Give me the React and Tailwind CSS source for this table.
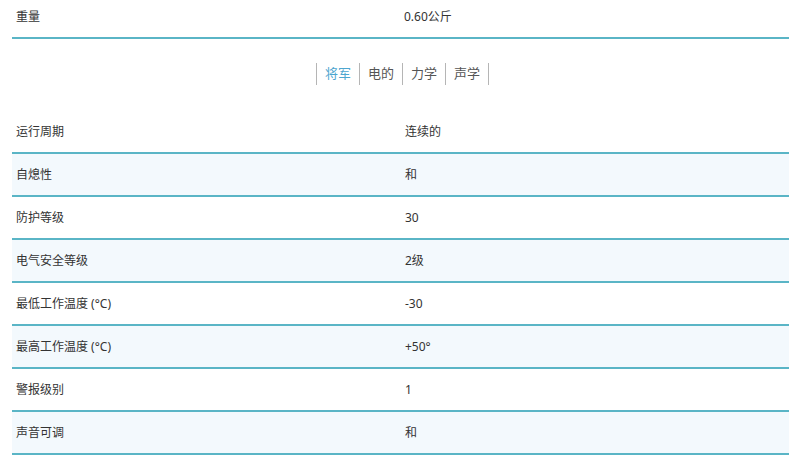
import React from 'react';

const rows = [
  ['运行周期', '连续的'],
  ['自熄性', '和'],
  ['防护等级', '30'],
  ['电气安全等级', '2级'],
  ['最低工作温度 (°C)', '-30'],
  ['最高工作温度 (°C)', '+50°'],
  ['警报级别', '1'],
  ['声音可调', '和'],
];

const tabs = ['将军', '电的', '力学', '声学'];

const font = { fontFamily: '"Noto Sans", "Noto Sans CJK SC", sans-serif' };

const App = () => {
  return (
    <div className="w-[800px] h-[462px] bg-white overflow-hidden text-[12px] text-[#333]" style={font}>
      <div className="ml-[12px] w-[777px]">
        <div className="grid grid-cols-[388px_1fr] h-[39px] items-center border-b-2 border-[#5ab5c6] pb-[4px]">
          <div className="pl-[4px]">重量</div>
          <div className="pl-[4px]">0.60公斤</div>
        </div>

        <div className="h-[72px] flex justify-center items-start pt-[24px]">
          <div className="flex items-center border-l border-[#b5b5b5] h-[22px] ml-[4px]">
            {tabs.map((t, i) => (
              <div
                key={t}
                className={`px-[8px] h-[22px] flex items-center border-r border-[#b5b5b5] text-[13px] ${i === 0 ? 'text-[#4ea6cf]' : 'text-[#555]'}`}
              >
                {t}
              </div>
            ))}
          </div>
        </div>

        {rows.map(([label, value], i) => (
          <div
            key={label}
            className={`grid grid-cols-[388px_1fr] h-[43px] items-center border-b-2 border-[#5ab5c6] ${i % 2 === 1 ? 'bg-[#f3f9fd]' : 'bg-white'}`}
          >
            <div className="pl-[4px]">{label}</div>
            <div className="pl-[5px]">{value}</div>
          </div>
        ))}
      </div>
    </div>
  );
};

export default App;
